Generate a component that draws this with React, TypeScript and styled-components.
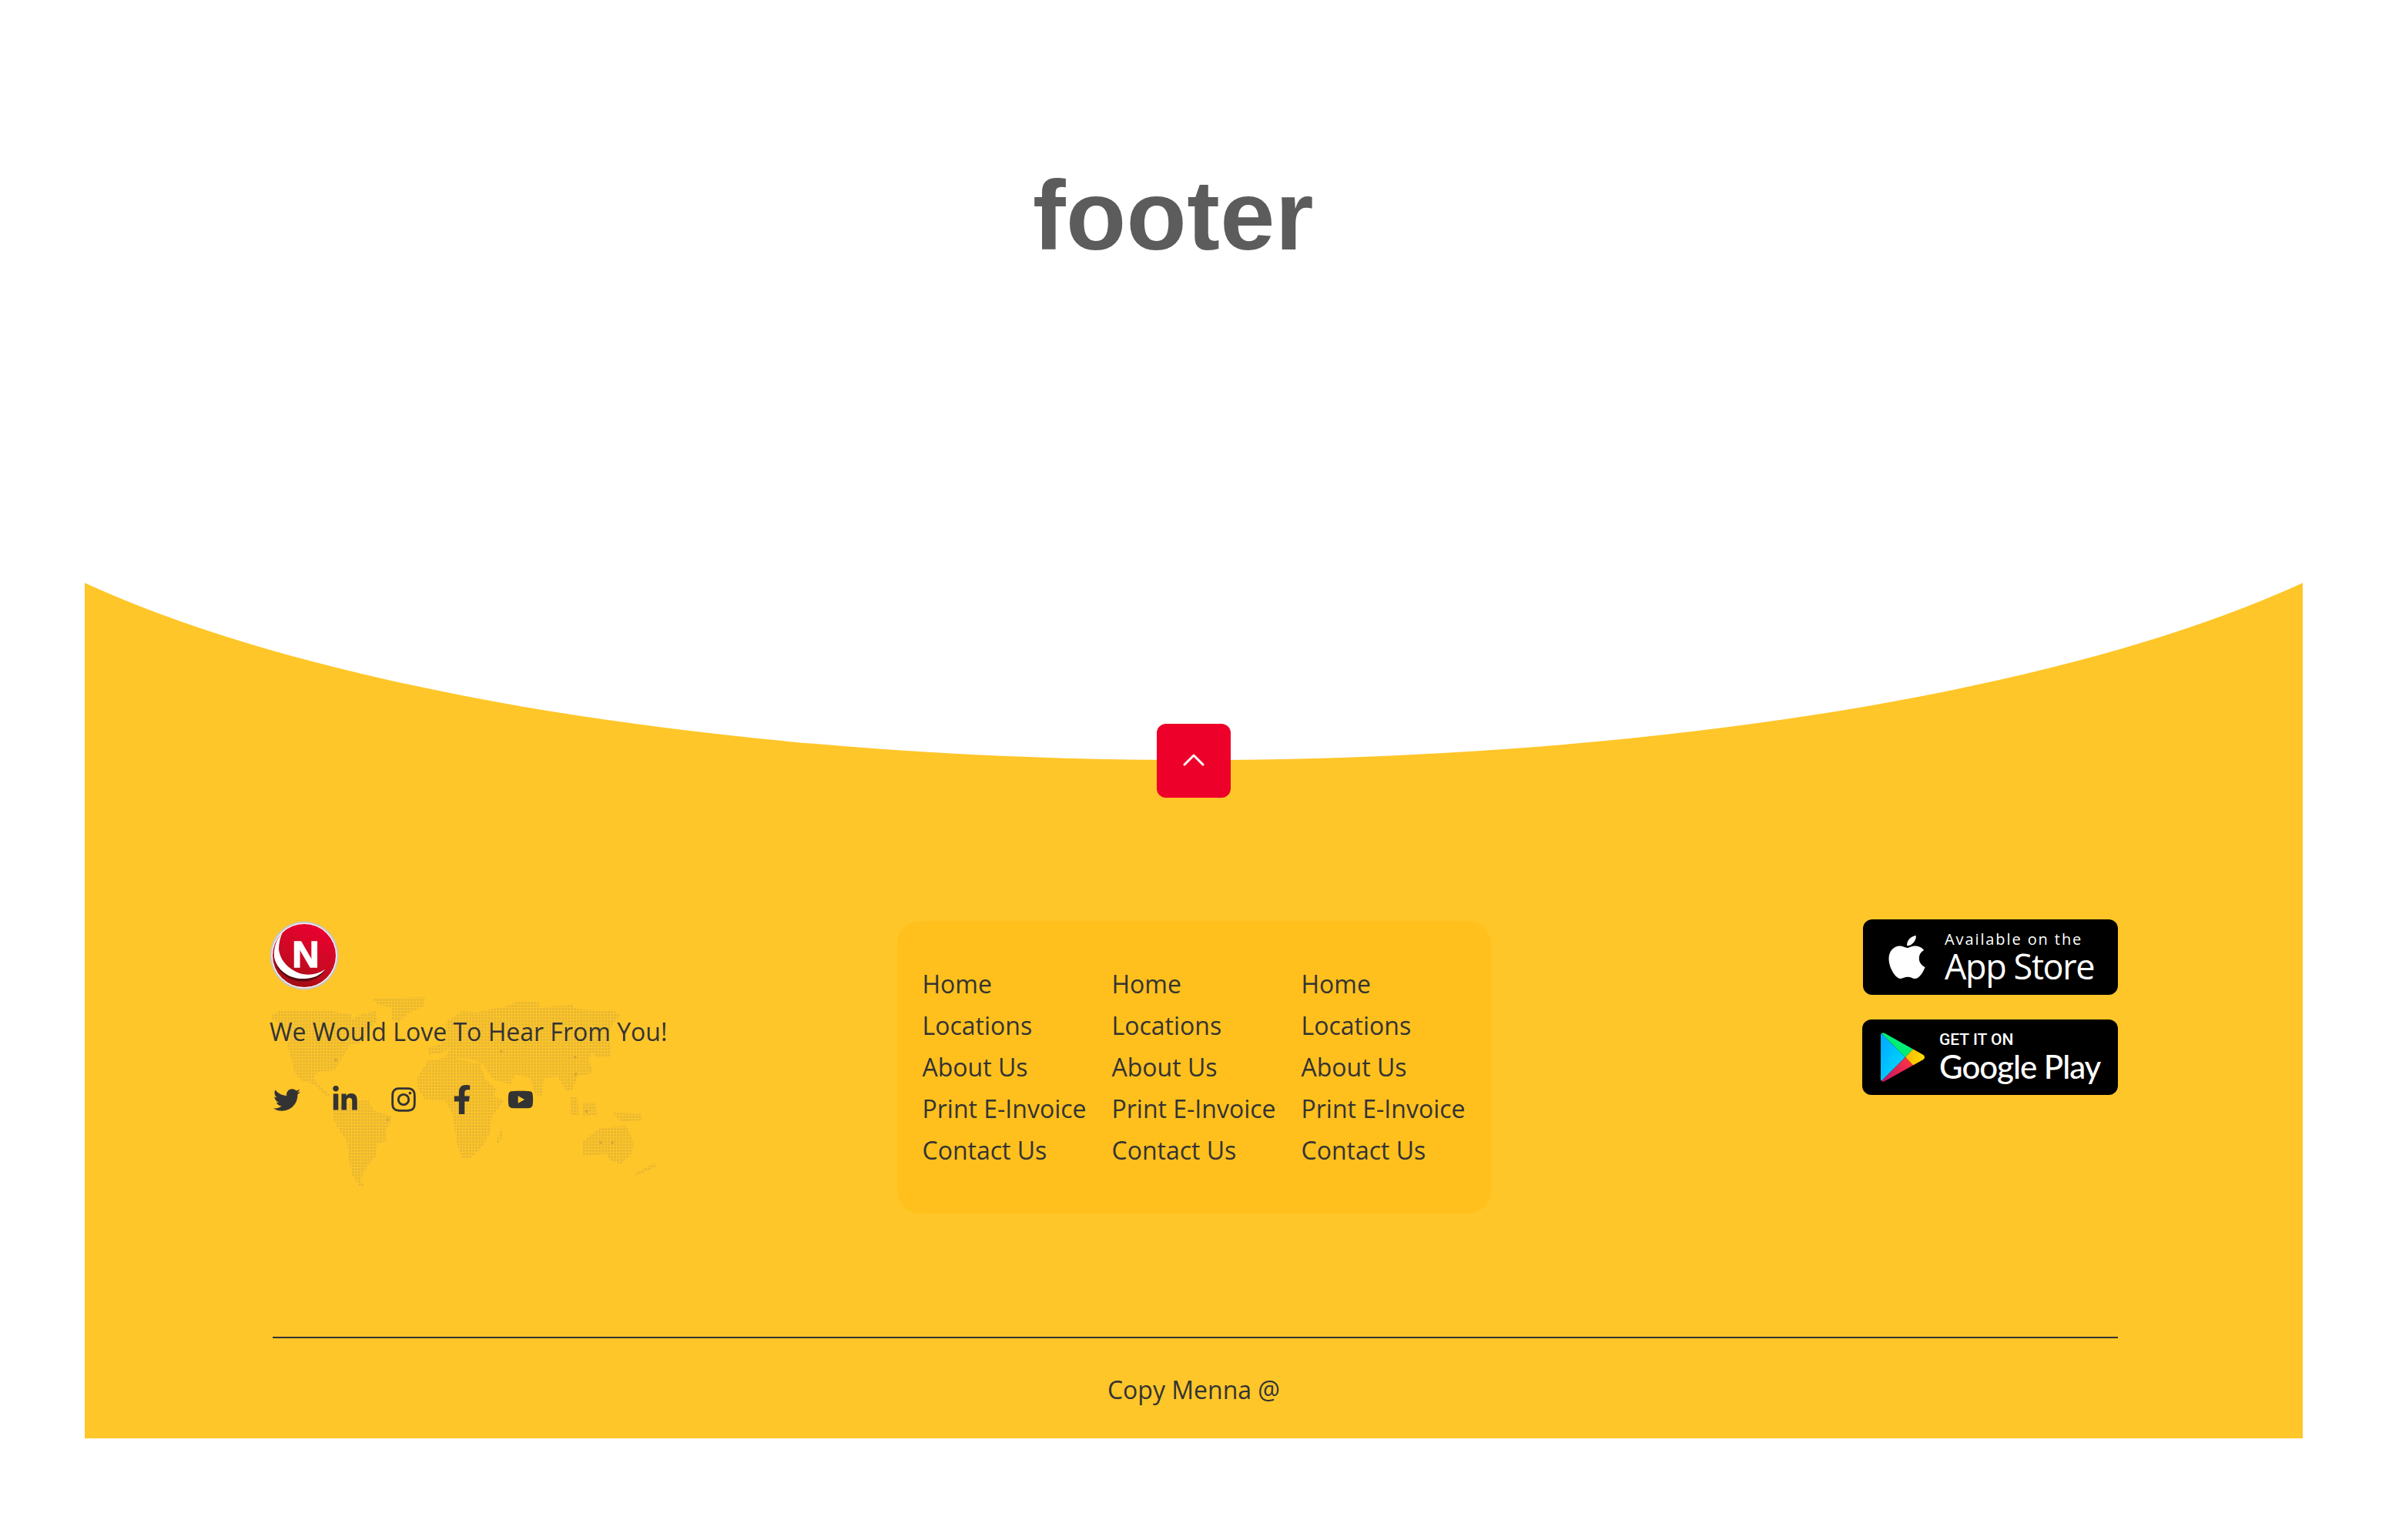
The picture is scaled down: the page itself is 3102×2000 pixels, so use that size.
import styled, { createGlobalStyle } from "styled-components";
import { FaApple, FaFacebookF, FaInstagram, FaLinkedinIn, FaTwitter, FaYoutube } from "react-icons/fa";

const GlobalStyle = createGlobalStyle`
    * {
        box-sizing: border-box;
    }

    body {
        margin: 0;
        background: #fff;
        font-family: "Open Sans", "Liberation Sans", sans-serif;
        color: #333;
    }
`;

const Page = styled.div`
    padding: 0 112px 132px 110px;
`;

const Heading = styled.h1`
    margin: 0;
    padding: 206px 53px 0 0;
    height: 757px;
    font-family: "Liberation Sans", Arial, sans-serif;
    font-size: 128px;
    font-weight: 700;
    line-height: 147px;
    letter-spacing: 0.4px;
    text-align: center;
    color: #5c5c5c;
`;

const FooterBox = styled.footer`
    position: relative;
    overflow: hidden;
    height: 1111px;
    padding-top: 439px;
    background: #ffc629;

    &::before {
        content: "";
        position: absolute;
        top: -752px;
        left: calc(50% - 1700px);
        width: 3400px;
        height: 982px;
        border-radius: 50%;
        background: #fff;
    }
`;

const TopButton = styled.a`
    position: absolute;
    top: 183px;
    left: calc(50% - 48px);
    display: flex;
    align-items: center;
    justify-content: center;
    width: 96px;
    height: 96px;
    border-radius: 12px;
    background: #ed0029;
`;

const Chevron = styled.svg`
    display: block;
    width: 28px;
    height: 16px;
    margin-bottom: 2px;
`;

const Container = styled.div`
    position: relative;
    width: 2400px;
    margin: 0 auto;
`;

const Columns = styled.div`
    display: grid;
    grid-template-columns: 1fr auto 1fr;
    align-items: start;
`;

const Brand = styled.div`
    position: relative;
    display: flex;
    flex-direction: column;
    align-items: flex-start;
    padding-top: 1px;
`;

const WorldMap = styled.svg`
    position: absolute;
    top: 89px;
    left: -5px;
    width: 520px;
    height: 265px;
`;

const Logo = styled.svg`
    position: relative;
    display: block;
    width: 90px;
    height: 90px;
    margin: -1px 0 -1px 0;
`;

const Tagline = styled.p`
    position: relative;
    margin: 33px 0 0;
    font-size: 32px;
    line-height: 44px;
`;

const Socials = styled.div`
    position: relative;
    display: flex;
    gap: 40px;
    margin: 48px 0 0 4px;
`;

const SocialLink = styled.a`
    display: flex;
    align-items: center;
    justify-content: center;
    width: 36px;
    height: 36px;
    color: #333;
`;

const LinksPanel = styled.nav`
    display: flex;
    gap: 33px;
    padding: 55px 33px;
    border-radius: 30px;
    background: #ffc01d;
`;

const LinkList = styled.ul`
    margin: 0;
    padding: 0;
    list-style: none;
`;

const LinkItem = styled.li`
    font-size: 32px;
    line-height: 54px;
    white-space: nowrap;
    color: #333;
`;

const Badges = styled.div`
    display: flex;
    flex-direction: column;
    align-items: flex-end;
    gap: 32px;
    margin-top: -2px;
`;

const Badge = styled.a<{ $width: number; $gap: number; $left: number }>`
    display: flex;
    align-items: center;
    gap: ${props => props.$gap}px;
    width: ${props => props.$width}px;
    height: 98px;
    padding-left: ${props => props.$left}px;
    border-radius: 12px;
    background: #000;
    color: #fff;
    text-decoration: none;
`;

const BadgeText = styled.div`
    display: flex;
    flex-direction: column;
`;

const AppSmall = styled.span`
    font-size: 20px;
    line-height: 24px;
    font-weight: 500;
    letter-spacing: 1.9px;
`;

const AppLarge = styled.span`
    font-size: 45px;
    line-height: 46px;
    font-weight: 500;
    letter-spacing: -1.4px;
`;

const PlaySmall = styled.span`
    font-family: Roboto, "Open Sans", sans-serif;
    font-size: 21px;
    line-height: 24px;
    font-weight: 500;
`;

const PlayLarge = styled.span`
    font-family: Lato, "Open Sans", sans-serif;
    font-size: 42px;
    line-height: 46px;
    font-weight: 500;
    letter-spacing: -1px;
`;

const Divider = styled.hr`
    height: 2px;
    margin: 160px 0 0 4px;
    border: 0;
    background: #333;
`;

const Copy = styled.p`
    margin: 45px 0 0;
    font-size: 32px;
    line-height: 44px;
    text-align: center;
`;

const links = ["Home", "Locations", "About Us", "Print E-Invoice", "Contact Us"];

const socials = [
    { Icon: FaTwitter, size: 35 },
    { Icon: FaLinkedinIn, size: 36 },
    { Icon: FaInstagram, size: 36 },
    { Icon: FaFacebookF, size: 38 },
    { Icon: FaYoutube, size: 34 },
];

const land = [
    "20,105 50,85 240,82 335,98 335,118 375,95 430,85 435,120 400,155 385,205 330,215 300,262 270,315 205,320 185,345 210,375 250,410 240,420 190,370 140,355 115,330 105,290 90,240 85,215 95,195 70,140 30,120",
    "415,35 620,30 615,65 560,90 520,125 490,120 490,70 440,60",
    "262,470 300,440 400,430 420,470 490,495 485,525 470,545 470,590 435,600 430,650 400,680 370,740 385,770 365,765 335,720 325,660 315,590 285,545 265,510",
    "590,345 630,280 720,262 835,290 855,350 895,385 890,420 930,430 880,500 875,560 835,625 800,655 765,660 745,600 735,530 725,480 700,435 620,430 595,390",
    "705,125 765,85 825,90 885,75 925,70 985,45 1065,50 1065,70 1195,60 1205,75 1355,85 1385,100 1355,130 1325,190 1345,215 1345,265 1285,265 1270,240 1260,275 1275,325 1215,340 1195,390 1175,400 1135,340 1085,345 1075,420 1050,410 1030,345 970,330 955,370 885,350 865,320 845,290 790,270 700,262 720,225 680,250 635,255 630,225 680,215 700,190",
    "1185,420 1215,420 1220,490 1190,490",
    "1235,440 1285,440 1290,490 1235,495",
    "1355,480 1465,485 1465,510 1380,515",
    "1235,590 1305,540 1405,530 1435,600 1425,640 1385,680 1345,670 1325,640 1235,650",
    "1435,720 1515,675 1520,690 1445,725",
    "895,600 920,540 923,570 910,600",
];

const cities = [
    [268, 270],
    [470, 503],
    [912, 237],
    [1200, 258],
    [1202, 325],
    [1245, 470],
    [1300, 592],
    [1345, 592],
];

const App = () => {
    return (
        <Page>
            <GlobalStyle />
            <Heading>footer</Heading>
            <FooterBox>
                <TopButton href="#">
                    <Chevron viewBox="0 0 28 16" fill="none" stroke="#fff" strokeWidth="3" strokeLinecap="round" strokeLinejoin="round">
                        <path d="M2 14 14 2l12 12" />
                    </Chevron>
                </TopButton>
                <Container>
                    <Columns>
                        <Brand>
                            <WorldMap viewBox="0 0 1560 795">
                                <defs>
                                    <pattern id="dots" width="12" height="12" patternUnits="userSpaceOnUse">
                                        <rect width="9" height="9" fill="#e3b433" fillOpacity="0.8" />
                                    </pattern>
                                    <clipPath id="land">
                                        {land.map(points => (
                                            <polygon key={points} points={points} />
                                        ))}
                                    </clipPath>
                                </defs>
                                <rect width="1560" height="795" fill="url(#dots)" clipPath="url(#land)" />
                                {cities.map(([x, y]) => (
                                    <rect key={x} x={x} y={y} width="10" height="10" fill="#c9a033" fillOpacity="0.7" />
                                ))}
                            </WorldMap>
                            <Logo viewBox="-1 -1 90 90">
                                <defs>
                                    <linearGradient id="logoRed" x1="0.75" y1="0.05" x2="0.4" y2="1">
                                        <stop offset="0" stopColor="#ea0030" />
                                        <stop offset="0.6" stopColor="#c90a22" />
                                        <stop offset="1" stopColor="#a20d12" />
                                    </linearGradient>
                                </defs>
                                <circle cx="44" cy="44" r="44.5" fill="#c6c6c6" />
                                <circle cx="44" cy="44" r="42.5" fill="#f3f3f3" />
                                <circle cx="44" cy="44" r="41" fill="url(#logoRed)" />
                                <path d="M16 14C8 22 4 34 5 46c3 18 19 31 39 30 12 0 22-7 27-14-9 6-19 8-29 6-16-4-29-16-31-32 0-8 2-16 5-22Z" fill="#5a0a10" transform="translate(0 1.5)" />
                                <path d="M16 14C8 22 4 34 5 46c3 16 19 29 39 28 12 0 22-5 27-12-9 6-19 8-29 6-16-4-29-16-31-32 0-8 2-16 5-22Z" fill="#fff" />
                                <text x="46" y="59" textAnchor="middle" fontFamily="Liberation Sans, Arial, sans-serif" fontWeight="700" fontSize="49" fill="#fff" stroke="#fff" strokeWidth="1.4">N</text>
                            </Logo>
                            <Tagline>We Would Love To Hear From You!</Tagline>
                            <Socials>
                                {socials.map(({ Icon, size }, index) => (
                                    <SocialLink href="#" key={index}>
                                        <Icon size={size} />
                                    </SocialLink>
                                ))}
                            </Socials>
                        </Brand>
                        <LinksPanel>
                            {[0, 1, 2].map(column => (
                                <LinkList key={column}>
                                    {links.map(link => (
                                        <LinkItem key={link}>{link}</LinkItem>
                                    ))}
                                </LinkList>
                            ))}
                        </LinksPanel>
                        <Badges>
                            <Badge href="#" $width={331} $gap={17} $left={25}>
                                <FaApple size={64} />
                                <BadgeText>
                                    <AppSmall>Available on the</AppSmall>
                                    <AppLarge>App Store</AppLarge>
                                </BadgeText>
                            </Badge>
                            <Badge href="#" $width={332} $gap={19} $left={24}>
                                <svg width="57" height="64" viewBox="0 0 57 64">
                                    <defs>
                                        <linearGradient id="playBlue" x1="0" y1="0" x2="1" y2="1">
                                            <stop offset="0" stopColor="#00a6ff" />
                                            <stop offset="1" stopColor="#00e2ff" />
                                        </linearGradient>
                                        <linearGradient id="playYellow" x1="0" y1="0" x2="1" y2="0">
                                            <stop offset="0" stopColor="#ffb900" />
                                            <stop offset="1" stopColor="#ffdd00" />
                                        </linearGradient>
                                        <linearGradient id="playRed" x1="1" y1="0" x2="0" y2="1">
                                            <stop offset="0" stopColor="#ff3a44" />
                                            <stop offset="1" stopColor="#c31162" />
                                        </linearGradient>
                                    </defs>
                                    <path d="M1 1c-.6.6-1 1.6-1 3v56c0 1.400.4 2.400 1 3l31-31Z" fill="url(#playBlue)" />
                                    <path d="M1 1c1-.9 2.400-1 4-.2L42 21.500 32 32Z" fill="#00ee76" />
                                    <path d="M42 21.500 54.500 28.500c3.300 1.800 3.300 5.200 0 7L42 42.500 32 32Z" fill="url(#playYellow)" />
                                    <path d="M42 42.500 5 63.200c-1.600.9-3 .8-4-.2L32 32Z" fill="url(#playRed)" />
                                </svg>
                                <BadgeText>
                                    <PlaySmall>GET IT ON</PlaySmall>
                                    <PlayLarge>Google Play</PlayLarge>
                                </BadgeText>
                            </Badge>
                        </Badges>
                    </Columns>
                    <Divider />
                    <Copy>Copy Menna @</Copy>
                </Container>
            </FooterBox>
        </Page>
    );
};

export default App;
